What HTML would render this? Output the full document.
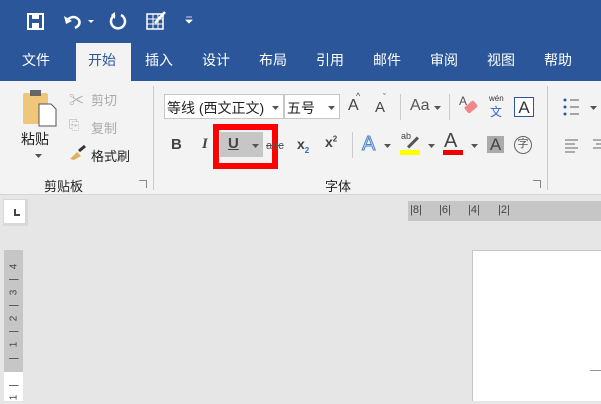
<!DOCTYPE html><html><head><meta charset="utf-8"><style>
*{margin:0;padding:0;box-sizing:border-box}
body{width:601px;height:401px;overflow:hidden;background:#e6e6e6;font-family:"Liberation Sans","Noto Sans CJK SC",sans-serif;position:relative}
.a{position:absolute;white-space:nowrap}
.top{left:0;top:0;width:601px;height:81px;background:#2b579a}
.tab{color:#fff;font-size:14px;top:50px}
.rib{left:0;top:81px;width:601px;height:114px;background:#f3f3f3;border-bottom:1px solid #d5d5d5}
.t{font-size:13px;color:#222}
.g{color:#aaa}
.rn{position:absolute;font-size:10px;color:#444;transform:rotate(-90deg);width:12px;text-align:center;left:8px}
.hr{position:absolute;font-size:11px;color:#444;top:204px}
</style></head><body>
<div class="a top"></div>
<svg class="a" style="left:26px;top:12px" width="20" height="20" viewBox="0 0 20 20"><rect x="2" y="2" width="15" height="15" fill="none" stroke="#fff" stroke-width="2"/><rect x="6" y="3" width="7" height="4" fill="#fff"/><rect x="6" y="11" width="7" height="5" fill="#fff"/></svg>
<svg class="a" style="left:62px;top:12px" width="36" height="20" viewBox="0 0 36 20"><path d="M5 8 Q12 2 17 8 Q19 13 13 16" fill="none" stroke="#fff" stroke-width="2.5"/><path d="M2 4 L4 12 L10 9 Z" fill="#fff"/><path d="M26 8 L32 8 L29 11Z" fill="#fff"/></svg>
<svg class="a" style="left:108px;top:11px" width="20" height="20" viewBox="0 0 20 20"><path d="M7 4 A7 7 0 1 0 13 4" fill="none" stroke="#fff" stroke-width="2.5"/><path d="M7 1 L7 8 L3 4Z" fill="#fff"/></svg>
<svg class="a" style="left:145px;top:10px" width="22" height="22" viewBox="0 0 22 22"><rect x="2" y="4" width="16" height="15" fill="none" stroke="#fff" stroke-width="1.5"/><path d="M2 9H18M2 14H18M8 4V19M13 4V19" stroke="#fff" stroke-width="1"/><path d="M10 13 L20 2" stroke="#fff" stroke-width="2.5"/></svg>
<svg class="a" style="left:185px;top:16px" width="8" height="8"><path d="M1 1H7M1 4H7L4 7Z" fill="#fff" stroke="#fff" stroke-width=".8"/></svg>
<div class="a" style="left:76px;top:43px;width:55px;height:38px;background:#f3f3f3"></div>
<div class="a tab" style="left:22px">文件</div>
<div class="a tab" style="left:88px;color:#2b579a">开始</div>
<div class="a tab" style="left:145px">插入</div>
<div class="a tab" style="left:202px">设计</div>
<div class="a tab" style="left:259px">布局</div>
<div class="a tab" style="left:316px">引用</div>
<div class="a tab" style="left:373px">邮件</div>
<div class="a tab" style="left:430px">审阅</div>
<div class="a tab" style="left:487px">视图</div>
<div class="a tab" style="left:544px">帮助</div>
<div class="a rib"></div>
<svg class="a" style="left:22px;top:88px" width="36" height="40" viewBox="0 0 36 40"><rect x="1" y="5" width="25" height="31" fill="#f0c77a" rx="2"/><rect x="8" y="2" width="11" height="6" fill="#666"/><path d="M17 16H29L34 21V38H17Z" fill="#fff" stroke="#555"/></svg>
<div class="a t" style="left:21px;top:129px;font-size:14px">粘贴</div>
<svg class="a" style="left:35px;top:154px" width="8" height="5"><path d="M0 0H7L3.5 4Z" fill="#555"/></svg>
<div class="a t g" style="left:69px;top:89px;font-size:15px">✂</div><div class="a t g" style="left:91px;top:90px">剪切</div>
<div class="a t g" style="left:69px;top:117px">⎘</div><div class="a t g" style="left:91px;top:118px">复制</div>
<svg class="a" style="left:68px;top:145px" width="20" height="16"><path d="M2 14 L9 7 L13 11 L6 15Z" fill="#e0b060"/><path d="M11 6 L17 1" stroke="#333" stroke-width="3"/></svg>
<div class="a t" style="left:91px;top:146px">格式刷</div>
<div class="a t" style="left:44px;top:176px">剪贴板</div>
<div class="a" style="left:139px;top:180px;width:8px;height:8px;border-left:1px solid #888;border-bottom:1px solid #888;transform:rotate(180deg)"></div>
<div class="a" style="left:153px;top:86px;width:1px;height:104px;background:#ccc"></div>
<div class="a" style="left:164px;top:94px;width:120px;height:25px;background:#fff;border:1px solid #c6c6c6"></div>
<div class="a t" style="left:167px;top:98px;font-size:14px;width:103px;overflow:hidden">等线 (西文正文)</div>
<svg class="a" style="left:272px;top:106px" width="7" height="4"><path d="M0 0H7L3.5 4Z" fill="#555"/></svg>
<div class="a" style="left:284px;top:94px;width:56px;height:25px;background:#fff;border:1px solid #c6c6c6"></div>
<div class="a t" style="left:287px;top:98px;font-size:14px">五号</div>
<svg class="a" style="left:328px;top:106px" width="7" height="4"><path d="M0 0H7L3.5 4Z" fill="#555"/></svg>
<div class="a t" style="left:348px;top:97px;font-size:16px;color:#444">A</div><div class="a t" style="left:356px;top:91px;font-size:9px;color:#444">^</div>
<div class="a t" style="left:375px;top:99px;font-size:15px;color:#444">A</div><div class="a t" style="left:383px;top:92px;font-size:9px;color:#444">ˇ</div>
<div class="a" style="left:400px;top:94px;width:1px;height:26px;background:#ccc"></div>
<div class="a t" style="left:410px;top:97px;font-size:16px;color:#555">Aa</div>
<svg class="a" style="left:434px;top:106px" width="7" height="4"><path d="M0 0H7L3.5 4Z" fill="#555"/></svg>
<div class="a" style="left:449px;top:94px;width:1px;height:26px;background:#ccc"></div>
<div class="a t" style="left:459px;top:94px;font-size:12px;color:#555">A</div>
<div class="a" style="left:465px;top:103px;width:12px;height:8px;background:#e88;transform:rotate(-40deg);border-radius:2px"></div>
<div class="a" style="left:489px;top:94px;font-size:8px;color:#333">wén</div>
<div class="a" style="left:490px;top:103px;font-size:12px;color:#2b6cc4">文</div>
<div class="a" style="left:514px;top:97px;width:20px;height:20px;border:1px solid #2b579a;background:#fff;font-size:17px;text-align:center;line-height:19px;color:#333">A</div>
<div class="a" style="left:171px;top:136px;font-size:15px;font-weight:bold;color:#444">B</div>
<div class="a" style="left:202px;top:136px;font-size:15px;font-style:italic;font-family:'Liberation Serif',serif;font-weight:bold;color:#444">I</div>
<div class="a" style="left:220px;top:132px;width:43px;height:25px;background:#c6c6c6"></div>
<div class="a" style="left:228px;top:135px;font-size:15px;font-weight:bold;color:#444;text-decoration:underline">U</div>
<svg class="a" style="left:252px;top:144px" width="7" height="4"><path d="M0 0H7L3.5 4Z" fill="#555"/></svg>
<div class="a" style="left:213px;top:124px;width:65px;height:45px;border:6px solid #f00"></div>
<div class="a" style="left:266px;top:140px;font-size:11px;color:#555;text-decoration:line-through">abc</div>
<div class="a" style="left:297px;top:136px;font-size:14px;font-weight:bold;color:#444">x<sub style="font-size:8px;color:#2b6cc4">2</sub></div>
<div class="a" style="left:325px;top:134px;font-size:14px;font-weight:bold;color:#444">x<sup style="font-size:8px">2</sup></div>
<div class="a" style="left:352px;top:132px;width:1px;height:26px;background:#ccc"></div>
<div class="a" style="left:362px;top:133px;font-size:20px;color:#cfe4f7;-webkit-text-stroke:1px #4a86c8">A</div>
<svg class="a" style="left:384px;top:144px" width="7" height="4"><path d="M0 0H7L3.5 4Z" fill="#555"/></svg>
<div class="a" style="left:401px;top:131px;font-size:9px;color:#444">ab</div>
<div class="a" style="left:406px;top:141px;width:14px;height:3px;background:#555;transform:rotate(-45deg)"></div>
<div class="a" style="left:400px;top:150px;width:20px;height:5px;background:#ff0"></div>
<svg class="a" style="left:428px;top:144px" width="7" height="4"><path d="M0 0H7L3.5 4Z" fill="#555"/></svg>
<div class="a" style="left:444px;top:130px;font-size:20px;color:#444">A</div>
<div class="a" style="left:443px;top:150px;width:20px;height:5px;background:#e00"></div>
<svg class="a" style="left:471px;top:144px" width="7" height="4"><path d="M0 0H7L3.5 4Z" fill="#555"/></svg>
<div class="a" style="left:487px;top:136px;width:17px;height:17px;background:#aaa;font-size:17px;line-height:17px;text-align:center;color:#444">A</div>
<div class="a" style="left:514px;top:136px;width:18px;height:18px;border:1.3px solid #666;border-radius:50%;font-size:11px;line-height:15px;text-align:center;color:#555">字</div>
<div class="a t" style="left:325px;top:176px">字体</div>
<div class="a" style="left:533px;top:180px;width:8px;height:8px;border-left:1px solid #888;border-bottom:1px solid #888;transform:rotate(180deg)"></div>
<div class="a" style="left:547px;top:86px;width:1px;height:104px;background:#ccc"></div>
<svg class="a" style="left:562px;top:97px" width="39" height="20"><circle cx="3" cy="3" r="1.5" fill="#2b579a"/><circle cx="3" cy="10" r="1.5" fill="#2b579a"/><circle cx="3" cy="17" r="1.5" fill="#2b579a"/><path d="M8 3H17M8 10H17M8 17H17" stroke="#555"/><path d="M28 9H35L31.5 13Z" fill="#555"/></svg>
<svg class="a" style="left:564px;top:139px" width="37" height="14"><path d="M1 1H14M1 5H11M1 9H14M1 13H11M29 1H37M32 5H37M29 9H37" stroke="#666"/></svg>
<div class="a" style="left:3px;top:199px;width:25px;height:27px;background:#d8d8d8"></div>
<div class="a" style="left:4px;top:200px;width:21px;height:23px;background:#fff"></div>
<div class="a" style="left:14px;top:209px;width:6px;height:7px;border-left:2px solid #444;border-bottom:2px solid #444"></div>
<div class="a" style="left:408px;top:201px;width:193px;height:20px;background:#c6c6c6"></div>
<div class="hr" style="left:410px">|8|</div>
<div class="hr" style="left:439px">|6|</div>
<div class="hr" style="left:468px">|4|</div>
<div class="hr" style="left:498px">|2|</div>
<div class="a" style="left:4px;top:250px;width:19px;height:122px;background:#c6c6c6"></div>
<div class="a" style="left:4px;top:372px;width:19px;height:29px;background:#fff"></div>
<div class="rn" style="top:261px">4</div>
<div class="rn" style="top:274px">|</div>
<div class="rn" style="top:287px">3</div>
<div class="rn" style="top:300px">|</div>
<div class="rn" style="top:313px">2</div>
<div class="rn" style="top:326px">|</div>
<div class="rn" style="top:339px">1</div>
<div class="rn" style="top:353px">|</div>
<div class="rn" style="top:380px">|</div>
<div class="rn" style="top:392px">1</div>
<div class="a" style="left:472px;top:250px;width:129px;height:151px;background:#fff;border-left:1px solid #c6c6c6;border-top:1px solid #c6c6c6"></div>
<div class="a" style="left:590px;top:370px;width:11px;height:1px;background:#999"></div>
</body></html>
